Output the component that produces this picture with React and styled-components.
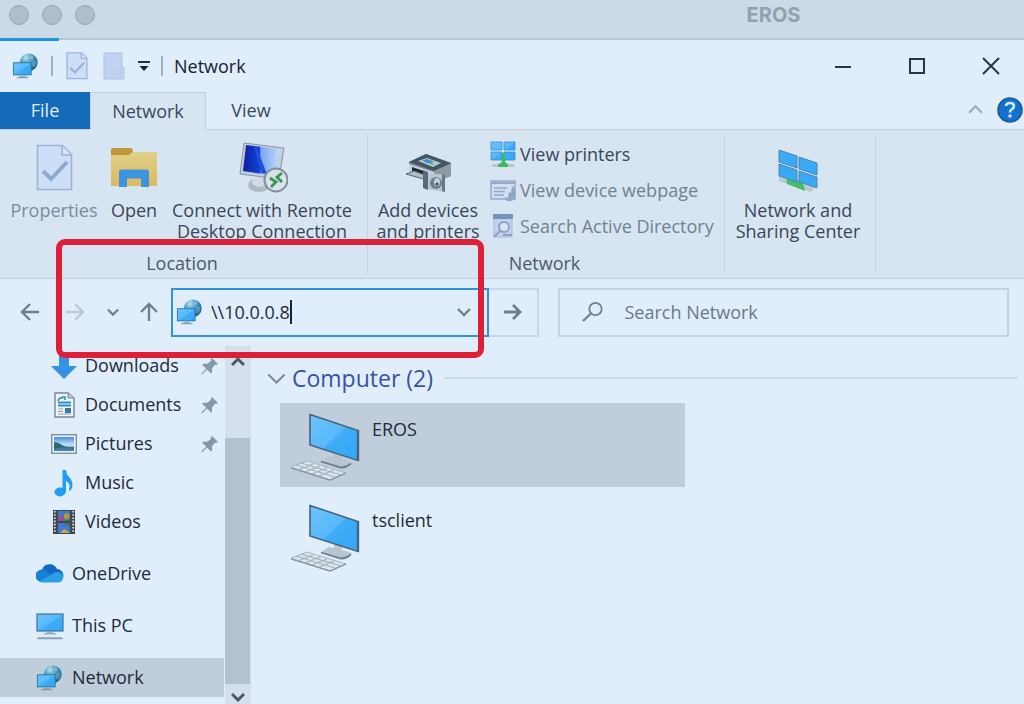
import React from "react";
import styled, { createGlobalStyle } from "styled-components";

const GlobalStyle = createGlobalStyle`
  * { box-sizing: border-box; }
  html, body { margin: 0; background: #e0eefb; }
  body, button, input {
    font-family: "Open Sans", "Noto Sans", sans-serif;
    font-size: 18px;
    line-height: 21px;
    color: #1f2a3c;
  }
  button { border: 0; padding: 0; background: none; }
  svg { display: block; flex: none; }
`;

const Page = styled.div`
  position: relative;
  display: flex;
  flex-direction: column;
  min-height: 100vh;
  overflow: hidden;
`;

/* ---------- outer window bar ---------- */
const HostBar = styled.header`
  position: relative;
  display: grid;
  grid-template-columns: 93px 1fr;
  align-items: center;
  height: 40px;
  padding: 0 0 8px 9px;
  background: #ccd9e6;
  border-bottom: 2px solid #bac8d5;
`;
const Lights = styled.div`
  display: flex;
  gap: 13px;
`;
const Light = styled.button`
  width: 20px;
  height: 20px;
  border-radius: 50%;
  background: #b1beca;
  border: 1px solid #98a6b3;
`;
const HostTitle = styled.div`
  font: 700 20px/24px Inter, sans-serif;
  color: #93a1af;
  text-align: center;
  padding-left: 421px;
`;
const Progress = styled.div`
  position: absolute;
  left: 0;
  bottom: -3px;
  width: 59px;
  height: 3px;
  background: #1f97df;
`;

/* ---------- explorer title bar ---------- */
const TitleBar = styled.div`
  display: flex;
  align-items: center;
  justify-content: space-between;
  height: 52px;
  padding: 0 20px 0 12px;
`;
const QuickTools = styled.div`
  display: flex;
  align-items: center;
  gap: 11px;
`;
const Divider = styled.span`
  width: 2px;
  height: 20px;
  background: #a3afbb;
`;
const IconButton = styled.button`
  display: flex;
  align-items: center;
  justify-content: center;
  width: ${(p) => p.$w || 26}px;
  height: ${(p) => p.$h || 28}px;
`;
const WindowTitle = styled.h1`
  margin: 0;
  font-size: 18px;
  line-height: 24px;
  font-weight: 400;
  color: #16202e;
`;
const WindowButtons = styled.div`
  display: flex;
  gap: 48px;
`;

/* ---------- tabs ---------- */
const TabBar = styled.div`
  display: flex;
  height: 38px;
  padding-right: 1px;
  border-bottom: 1px solid #c3d1de;
`;
const Tab = styled.button`
  height: ${(p) => (p.$active ? 38 : 37)}px;
  width: ${(p) => p.$w}px;
  color: ${(p) => (p.$file ? "#e0eefb" : "#3c4759")};
  background: ${(p) => (p.$file ? "#126ab8" : p.$active ? "#d7e5f3" : "transparent")};
  border: ${(p) => (p.$active ? "1px solid #c3d1de" : "0")};
  border-bottom: 0;
`;
const TabTools = styled.div`
  display: flex;
  align-items: center;
  gap: 14px;
  height: 35px;
  margin-left: auto;
`;

/* ---------- ribbon ---------- */
const Ribbon = styled.div`
  display: flex;
  height: 149px;
  padding: 4px 0 4px;
  background: #d7e5f3;
  border-bottom: 1px solid #c3d1de;
`;
const Group = styled.section`
  display: flex;
  flex-direction: column;
  justify-content: space-between;
  min-width: ${(p) => p.$w}px;
  border-right: 1px solid #c6d4e1;
`;
const GroupBody = styled.div`
  display: flex;
`;
const GroupName = styled.div`
  text-align: center;
  padding-right: 3px;
  color: #4d596a;
`;
const BigButton = styled.button`
  display: flex;
  flex-direction: column;
  align-items: center;
  justify-content: flex-start;
  gap: 8px;
  width: ${(p) => p.$w}px;
  padding-top: 10px;
  white-space: nowrap;
  color: ${(p) => (p.disabled ? "#7f8b9a" : "#3a4557")};
`;
const Line = styled.span`
  display: block;
`;
const SmallList = styled.div`
  display: flex;
  flex-direction: column;
  padding: 2px 10px 0 2px;
`;
const SmallButton = styled.button`
  display: flex;
  align-items: center;
  gap: 4px;
  height: 36px;
  white-space: nowrap;
  color: ${(p) => (p.disabled ? "#748191" : "#3a4557")};
`;

/* ---------- address row ---------- */
const AddressRow = styled.div`
  display: flex;
  align-items: center;
  height: 67px;
  padding: 0 15px 1px 17px;
`;
const NavButtons = styled.nav`
  display: flex;
  flex: none;
  align-items: center;
  justify-content: space-between;
  width: 154px;
  padding-right: 11px;
`;
const AddressGroup = styled.div`
  display: flex;
  flex: 368 1 368px;
  height: 49px;
`;
const AddressBox = styled.label`
  display: flex;
  flex: 1;
  align-items: center;
  padding: 0 16px 0 3px;
  border: 2px solid #3591df;
`;
const AddressInput = styled.input`
  field-sizing: content;
  margin-left: 7px;
  padding: 0;
  border: 0;
  outline: 0;
  background: transparent;
  line-height: 24px;
`;
const TextCaret = styled.span`
  width: 2px;
  height: 24px;
  background: #1a2431;
`;
const DropButton = styled(IconButton)`
  margin-left: auto;
`;
const GoButton = styled.button`
  display: flex;
  align-items: center;
  justify-content: center;
  width: 50px;
  border: 2px solid #c9d7e4;
  border-left: 0;
`;
const SearchBox = styled.label`
  display: flex;
  flex: 450 1 450px;
  align-items: center;
  gap: 20px;
  height: 49px;
  margin-left: 19px;
  padding-left: 22px;
  border: 2px solid #c5d3e0;
`;
const SearchInput = styled.input`
  flex: 1;
  min-width: 0;
  padding: 0;
  border: 0;
  outline: 0;
  background: transparent;
  line-height: 24px;
  &::placeholder { color: #6b7887; opacity: 1; }
`;

/* ---------- body ---------- */
const Body = styled.div`
  display: flex;
  flex: 1;
`;
const Sidebar = styled.nav`
  width: 224px;
`;
const SideList = styled.ul`
  list-style: none;
  margin: 0;
  padding: 0;
`;
const SideItem = styled.li`
  margin-top: ${(p) => (p.$root ? 13 : 0)}px;
`;
const SideLink = styled.a`
  display: flex;
  align-items: center;
  gap: 8px;
  height: 39px;
  padding: 0 5px 0 ${(p) => (p.$root ? 36 : 51)}px;
  color: #1f2a3c;
  text-decoration: none;
  background: ${(p) => (p.$current ? "#c0cddb" : "transparent")};
`;
const SideText = styled.span`
  flex: 1;
`;
const ScrollBar = styled.div`
  display: flex;
  flex-direction: column;
  width: 26px;
  margin-left: 1px;
  padding-right: 1px;
  background: #d3dfec;
`;
const ScrollThumb = styled.div`
  flex: 1;
  margin-top: 60px;
  background: #b4c2d0;
`;
const ScrollButton = styled(IconButton)`
  width: 100%;
  height: ${(p) => p.$h}px;
  align-items: ${(p) => (p.$end ? "flex-end" : "center")};
`;
const Content = styled.main`
  flex: 1;
  padding: 17px 6px 0 16px;
`;
const SectionHead = styled.div`
  display: flex;
  align-items: center;
  height: 30px;
  gap: 6px;
`;
const SectionTitle = styled.h2`
  margin: 0 6px 0 0;
  font-size: 23px;
  line-height: 30px;
  font-weight: 400;
  color: #3b51a4;
`;
const Rule = styled.span`
  flex: 1;
  height: 2px;
  background: #cbd9e7;
`;
const Computers = styled.div`
  display: flex;
  flex-direction: column;
  gap: 7px;
  max-width: 418px;
  padding: 10px 0 0 13px;
`;
const Computer = styled.button`
  display: flex;
  align-items: flex-start;
  gap: 12px;
  height: 84px;
  padding: 8px 0 0 10px;
  text-align: left;
  background: ${(p) => (p.$selected ? "#c0cddb" : "transparent")};
`;
const ComputerName = styled.span`
  padding-top: 8px;
`;
const Highlight = styled.div`
  position: absolute;
  left: 56px;
  top: 239px;
  width: 428px;
  height: 119px;
  border: 6px solid #dd1f38;
  border-radius: 9px;
  pointer-events: none;
`;

/* ---------- drawings ---------- */
const Defs = styled.svg`
  position: absolute;
`;
const Gradients = () => (
  <Defs width="0" height="0" aria-hidden="true">
    <defs>
      <linearGradient id="screen" x1="0" y1="0" x2="1" y2="1">
        <stop offset="0" stopColor="#6cc3fa" />
        <stop offset=".5" stopColor="#58b9fa" />
        <stop offset=".52" stopColor="#3fadf8" />
        <stop offset="1" stopColor="#34a6f4" />
      </linearGradient>
      <radialGradient id="globe" cx=".35" cy=".25" r=".8">
        <stop offset="0" stopColor="#a9d6e8" />
        <stop offset=".45" stopColor="#4c9cc4" />
        <stop offset="1" stopColor="#1c5478" />
      </radialGradient>
      <linearGradient id="folder" x1="0" y1="0" x2="0" y2="1">
        <stop offset="0" stopColor="#dfd08b" />
        <stop offset="1" stopColor="#dcb95d" />
      </linearGradient>
      <linearGradient id="rdp" x1="0" y1="0" x2="1" y2="0">
        <stop offset="0" stopColor="#0a1f9c" />
        <stop offset=".45" stopColor="#1641d8" />
        <stop offset=".48" stopColor="#7ba3ee" />
        <stop offset="1" stopColor="#c4dcf8" />
      </linearGradient>
      <linearGradient id="photo" x1="0" y1="0" x2="0" y2="1">
        <stop offset="0" stopColor="#3f8eea" />
        <stop offset=".55" stopColor="#c5e2f3" />
        <stop offset="1" stopColor="#2d7396" />
      </linearGradient>
    </defs>
  </Defs>
);

const NetworkIcon = () => (
  <svg width="28" height="28" viewBox="0 0 30 30">
    <circle cx="18" cy="11" r="9.500" fill="url(#globe)" />
    <path d="M13 4c2-2 4-2 5-2l-1 3 1 2-3 2-3-1zM20 3l3 2-1 3-2-1z" fill="#b3dcea" opacity=".45" />
    <path d="M22 10l4-1q1 5-2 8l-3-2z" fill="#8fc0d6" opacity=".35" />
    <rect x="1.500" y="11.500" width="19" height="13" fill="url(#screen)" stroke="#2b79a8" />
    <path d="M8 26h7M5.500 27.500h12" stroke="#829bb0" strokeWidth="1.300" />
  </svg>
);
const DocCheck = ({ big }) => (
  <svg width={big ? 37 : 22} height={big ? 48 : 28} viewBox="0 0 37 48">
    <path d="M1.500 1.500h25l9 9v35h-34z" fill="#cddff6" stroke="#9cb3dc" strokeWidth={big ? 1.6 : 2.2} />
    <path d="M26 2v9h9" fill="#d9e7f6" stroke="#9cb3dc" strokeWidth={big ? 1.6 : 2.2} />
    <path d="M7 27l8 8 16-17" fill="none" stroke={big ? "#8ea8ce" : "#9db2da"} strokeWidth="4" />
  </svg>
);
const NewFolder = () => (
  <svg width="22" height="28" viewBox="0 0 22 28">
    <path d="M1 1h18v14h2v12H1z" fill="#c0d4f1" stroke="#aec2e8" />
    <path d="M17 26V16h3" fill="none" stroke="#b3c4ec" />
  </svg>
);
const OpenFolder = () => (
  <svg width="48" height="48" viewBox="0 0 48 48">
    <path d="M1 6q0-2 2-2h17q3 0 3 4l-3 4H1z" fill="#c29638" />
    <path d="M1 11h18l4-3h24v34H1z" fill="url(#folder)" />
    <path d="M9 43V28q0-2.500 2.500-2.500h25q2.500 0 2.500 2.500v15h-8v-8.500H17V43z" fill="#3a94df" />
  </svg>
);
const RemoteIcon = () => (
  <svg width="52" height="52" viewBox="-2 0 52 52">
    <ellipse cx="21" cy="43" rx="11" ry="7" fill="#aebbc7" />
    <ellipse cx="22" cy="40" rx="8" ry="5" fill="#d2dbe3" />
    <path d="M6 1l40 5-5 31L2 32z" fill="#c3ced9" stroke="#8795a4" />
    <path d="M8 3l34 4-4 27-33-5z" fill="url(#rdp)" />
    <path d="M18 4l11 28-6-1L16 4z" fill="#1d50dc" />
    <circle cx="38" cy="38" r="11.500" fill="#d8e2eb" stroke="#818e9b" strokeWidth="2" />
    <path d="M32 36l6 4-5 5M44 31l-5 4 5 5" fill="none" stroke="#36974b" strokeWidth="2.800" />
  </svg>
);
const PrinterIcon = () => (
  <svg width="48" height="48" viewBox="0 0 48 48">
    <path d="M5 18L22 10l25 9v13l-18 7L5 29z" fill="#7a8793" />
    <path d="M5 18L22 10l25 9-17 8z" fill="#455663" />
    <path d="M14 17l9-3 14 5-8 4z" fill="#b4c9d8" />
    <path d="M18 16.500l5-1.500 7 2.500-6 2z" fill="#3f8fd6" />
    <path d="M25 19l3 2 2-1-3-2z" fill="#4fb269" />
    <path d="M30 27l17-7v12l-17 5z" fill="#8e9ba5" />
    <path d="M5 20l25 8v9L5 28z" fill="#c8d3db" />
    <path d="M8 23l12 4v4L8 27z" fill="#1f2c35" />
    <path d="M2 30l8-3 13 5v4z" fill="#b1bec9" stroke="#586a77" />
    <path d="M19 26l5 2v18l-5-2z" fill="#5c6b78" />
    <path d="M24 29l16 2v17l-16-3z" fill="#bbc6cf" />
    <path d="M38 30l3 1v17l-3-1z" fill="#687785" />
    <circle cx="32" cy="39" r="6" fill="#73818d" />
    <ellipse cx="33" cy="38" rx="3" ry="4" fill="#c6d0d8" />
    <circle cx="33" cy="40" r="1.500" fill="#3d4b57" />
  </svg>
);
const ViewPrintersIcon = () => (
  <svg width="26" height="28" viewBox="0 0 26 28">
    <path d="M1 2h11v8H1zM14 2h11v8H14zM1 12h11v8H1zM14 12h11v8H14z" fill="url(#screen)" stroke="#358fc8" strokeWidth=".8" />
    <path d="M2 24h22v3H2z" fill="#b7c6cc" />
    <path d="M12 13h3v8q0 2 3 3v3H8v-3q4-1 4-3z" fill="#3fb75c" />
  </svg>
);
const WebpageIcon = () => (
  <svg width="26" height="24" viewBox="0 0 26 24">
    <rect x="1" y="3" width="24" height="18" fill="#d0def0" stroke="#94a9cb" strokeWidth="1.500" />
    <path d="M1 5h24" stroke="#94a9cb" strokeWidth="2" />
    <path d="M4 10h13M4 13.500h11M4 17h10" stroke="#93a8c9" strokeWidth="1.600" />
    <path d="M22 8l3 3v10l-4 2h-4l-3-4 4 1 1-6 2 1z" fill="#8fa5c7" />
  </svg>
);
const DirectoryIcon = () => (
  <svg width="26" height="26" viewBox="0 0 26 26">
    <rect x="4" y="2" width="18" height="22" fill="#c0d1e9" stroke="#a6b9d7" />
    <path d="M3 1h20v5H3z" fill="#7793ba" />
    <circle cx="14" cy="14" r="5" fill="#d8e4f4" stroke="#8ba1c6" strokeWidth="2" />
    <path d="M10.500 17.500L4 24M13 22h9" stroke="#8ba1c6" strokeWidth="2" />
  </svg>
);
const SharingIcon = () => (
  <svg width="44" height="48" viewBox="0 0 44 48">
    <path d="M3 33l35 11-3 4L3 37z" fill="#bdc8cc" />
    <path d="M10 33l17 5 2 9-18-7z" fill="#48be67" />
    <path d="M3 6l18 6v12L3 18zM23 13l18 6v12l-18-6zM3 20l18 6v12L3 32zM23 27l18 6v11l-18-6z" fill="#39a9f6" stroke="#4b88af" strokeWidth="1" />
  </svg>
);
const Arrow = ({ turn = 0, color = "#70808f", size = 22 }) => (
  <svg width={size} height={size} viewBox="0 0 22 22">
    <path transform={`rotate(${turn} 11 11)`} d="M20 11H3M11 3l-8 8 8 8" fill="none" stroke={color} strokeWidth="2.400" />
  </svg>
);
const Chevron = ({ up, w = 14, color = "#708090", stroke = 2 }) => (
  <svg width={w} height={w} viewBox="0 0 14 14">
    <path d={up ? "M1 10l6-6 6 6" : "M1 4l6 6 6-6"} fill="none" stroke={color} strokeWidth={stroke} />
  </svg>
);
const GoArrow = () => (
  <svg width="20" height="18" viewBox="0 0 20 18">
    <path d="M1 9h16M10 2l7 7-7 7" fill="none" stroke="#6f7e8d" strokeWidth="2.800" />
  </svg>
);
const SearchIcon = () => (
  <svg width="22" height="22" viewBox="0 0 22 22">
    <circle cx="13.500" cy="8" r="6.200" fill="none" stroke="#6e7f90" strokeWidth="1.800" />
    <path d="M9 12.500L1 20" stroke="#6e7f90" strokeWidth="2.200" />
  </svg>
);
const PinIcon = () => (
  <svg width="18" height="18" viewBox="0 0 18 18">
    <path d="M11 1l6 6-2 1-1-.5-3 4v4l-1 1-4-4-5 5-.8-.8 5-5-4-4 1-1h4l4-3-.5-1z" fill="#8398ab" />
  </svg>
);
const DownloadIcon = () => (
  <svg width="26" height="26" viewBox="0 0 26 26">
    <path d="M8 0h10v13h8L13 26 0 13h8z" fill="#3591e2" />
  </svg>
);
const DocumentIcon = () => (
  <svg width="26" height="28" viewBox="0 0 26 28">
    <path d="M4 2h13l6 5v19H4z" fill="#eef4f8" stroke="#768591" strokeWidth="1.400" />
    <path d="M17 2v5h6" fill="#c1cbd3" stroke="#768591" />
    <path d="M11 6h3v3M7 10q1-4 5-3" fill="none" stroke="#2d8fc9" strokeWidth="1.600" />
    <path d="M7 11.500h13M7 14.500h13" stroke="#2d8fc9" strokeWidth="1.800" />
    <path d="M7 18h5M7 20.500h5M7 23h13" stroke="#8d9ba6" strokeWidth="1.200" />
    <path d="M14 17h6v5h-6z" fill="#3a75a9" />
  </svg>
);
const PictureIcon = () => (
  <svg width="26" height="20" viewBox="0 0 26 20">
    <rect x=".7" y=".7" width="24.600" height="18.600" fill="#edf4f9" stroke="#80909d" strokeWidth="1.400" />
    <rect x="3" y="3" width="20" height="14" fill="url(#photo)" />
    <path d="M3 8q4 0 8 3t12 2v4H3z" fill="#2b6a73" />
    <path d="M3 15q10-3 20 0v2H3z" fill="#4282a8" />
  </svg>
);
const MusicIcon = () => (
  <svg width="26" height="28" viewBox="0 0 26 28">
    <ellipse cx="9" cy="23" rx="5.600" ry="4.400" fill="#239df2" />
    <path d="M11.500 1H15q0 4 3 7 6 6 2 13l-2 1q2-8-3-10v11h-3.500z" fill="#239df2" />
  </svg>
);
const VideoIcon = () => (
  <svg width="26" height="26" viewBox="0 0 26 26">
    <path d="M2 1h22v24H2z" fill="#3f4850" />
    <path d="M3.800 2v22M22.200 2v22" stroke="#d7e0e6" strokeWidth="1.800" strokeDasharray="1.600 1.600" />
    <path d="M7 2h12v10H7zM7 14h12v10H7z" fill="#3f79cf" />
    <path d="M7 9l4-3 3 3-2 3H7z" fill="#9b4e8f" />
    <path d="M13 5l4-1 2 4-3 3-3-2z" fill="#b39d33" />
    <path d="M12 12h7v-2zM13 14h6v4z" fill="#3b7a4b" />
    <path d="M9 24l4-4 5 3v1z" fill="#d4a83a" />
  </svg>
);
const CloudIcon = () => (
  <svg width="28" height="20" viewBox="0 0 28 20">
    <path d="M7 18a6 6 0 01-1-12 8 8 0 0115-1 6.500 6.500 0 010 13z" fill="#1169bf" />
    <path d="M7 18A6.300 6.300 0 116 5.500q3 0 5 2l8 5.500-9 5z" fill="#1480d8" />
    <path d="M4 17l11-6q3-3 7-3a5 5 0 010 10.500H7q-2 0-3-1.500z" fill="#2ba0e6" />
  </svg>
);
const PcIcon = () => (
  <svg width="28" height="28" viewBox="0 0 28 28">
    <rect x="1" y="2" width="26" height="17" fill="url(#screen)" stroke="#38779f" strokeWidth="1.200" />
    <path d="M11 20h6v1h3v1.500H8V21h3z" fill="#9badbc" />
    <path d="M2 25.200h24l1 2H1z" fill="#879fb7" />
  </svg>
);
const ComputerIcon = () => (
  <svg width="70" height="70" viewBox="0 0 70 70">
    <path d="M1 56l16-6 39 12-16 7z" fill="#dbe5ed" stroke="#a9b6c1" />
    <path d="M1 57l39 12 16-7" fill="none" stroke="#7e8e9c" strokeWidth="1.300" />
    <path d="M6 54l39 12M11 52l40 12M8 59l15-6M15 61l15-6M22 63l15-6M29 65l15-6" stroke="#a3b1bd" strokeWidth="1.200" />
    <path d="M31 50l8-5 5 1v-5l8 2v5l10 3-4 5-7 1z" fill="#b9c6d1" />
    <path d="M31 50.500l20 6q5 0 10-4" fill="none" stroke="#687c8c" strokeWidth="1.800" />
    <path d="M20 3.500l48 16v30L20 34z" fill="url(#screen)" stroke="#47647a" strokeWidth="1.600" />
    <path d="M68 19v31" stroke="#47647a" strokeWidth="2.400" />
  </svg>
);

const places = [
  ["Downloads", DownloadIcon, true],
  ["Documents", DocumentIcon, true],
  ["Pictures", PictureIcon, true],
  ["Music", MusicIcon],
  ["Videos", VideoIcon],
];
const roots = [
  ["OneDrive", CloudIcon],
  ["This PC", PcIcon],
  ["Network", NetworkIcon, true],
];

export default function App() {
  return (
    <Page>
      <GlobalStyle />
      <Gradients />
      <HostBar>
        <Lights>
          <Light aria-label="Close session" />
          <Light aria-label="Minimize session" />
          <Light aria-label="Zoom session" />
        </Lights>
        <HostTitle>EROS</HostTitle>
        <Progress />
      </HostBar>

      <TitleBar>
        <QuickTools>
          <NetworkIcon />
          <Divider />
          <IconButton aria-label="Properties"><DocCheck /></IconButton>
          <IconButton aria-label="New folder"><NewFolder /></IconButton>
          <IconButton $w={12} aria-label="Customize toolbar">
            <svg width="12" height="12" viewBox="0 0 12 12">
              <path d="M0 2h12" stroke="#26303c" strokeWidth="2" />
              <path d="M1.500 6h9L6 11z" fill="#1a222c" />
            </svg>
          </IconButton>
          <Divider />
          <WindowTitle>Network</WindowTitle>
        </QuickTools>
        <WindowButtons>
          <IconButton aria-label="Minimize">
            <svg width="18" height="18"><path d="M1 10h16" stroke="#2b3541" strokeWidth="2" /></svg>
          </IconButton>
          <IconButton aria-label="Maximize">
            <svg width="18" height="18"><path d="M2 2h14v14H2z" fill="none" stroke="#2b3541" strokeWidth="2" /></svg>
          </IconButton>
          <IconButton aria-label="Close">
            <svg width="18" height="18"><path d="M1 1l16 16M17 1L1 17" stroke="#2b3541" strokeWidth="2" /></svg>
          </IconButton>
        </WindowButtons>
      </TitleBar>

      <TabBar>
        <Tab $file $w={90}>File</Tab>
        <Tab $active $w={116}>Network</Tab>
        <Tab $w={90}>View</Tab>
        <TabTools>
          <IconButton $w={15} aria-label="Collapse ribbon"><Chevron up w={15} color="#9eabb8" /></IconButton>
          <IconButton aria-label="Help">
            <svg width="26" height="26" viewBox="0 0 26 26">
              <circle cx="13" cy="13" r="12" fill="#1372cc" stroke="#155797" strokeWidth="1.500" />
              <path d="M9 9q0-3 4-3t4 3q0 2-2.500 3.500Q13 13.500 13 15.500" fill="none" stroke="#d6eaff" strokeWidth="2.600" />
              <path d="M11.500 17.500h3v3h-3z" fill="#d6eaff" />
            </svg>
          </IconButton>
        </TabTools>
      </TabBar>

      <Ribbon>
        <Group $w={368}>
          <GroupBody>
            <BigButton $w={108} disabled><DocCheck big />Properties</BigButton>
            <BigButton $w={52}><OpenFolder />Open</BigButton>
            <BigButton $w={204}>
              <IconButton as="span" $w={52} $h={48}><RemoteIcon /></IconButton>
              <span><Line>Connect with Remote</Line><Line>Desktop Connection</Line></span>
            </BigButton>
          </GroupBody>
          <GroupName>Location</GroupName>
        </Group>
        <Group $w={357}>
          <GroupBody>
            <BigButton $w={120}>
              <PrinterIcon />
              <span><Line>Add devices</Line><Line>and printers</Line></span>
            </BigButton>
            <SmallList>
              <SmallButton><ViewPrintersIcon />View printers</SmallButton>
              <SmallButton disabled><WebpageIcon />View device webpage</SmallButton>
              <SmallButton disabled><DirectoryIcon />Search Active Directory</SmallButton>
            </SmallList>
          </GroupBody>
          <GroupName>Network</GroupName>
        </Group>
        <Group $w={151}>
          <BigButton $w={146}>
            <SharingIcon />
            <span><Line>Network and</Line><Line>Sharing Center</Line></span>
          </BigButton>
        </Group>
      </Ribbon>

      <AddressRow>
        <NavButtons>
          <IconButton aria-label="Back"><Arrow /></IconButton>
          <IconButton aria-label="Forward"><Arrow turn={180} color="#bccad7" /></IconButton>
          <IconButton $w={12} aria-label="Recent locations"><Chevron w={12} stroke={2.6} /></IconButton>
          <IconButton $w={22} aria-label="Up"><Arrow turn={90} /></IconButton>
        </NavButtons>
        <AddressGroup>
          <AddressBox>
            <NetworkIcon />
            <AddressInput aria-label="Address" defaultValue={"\\\\10.0.0.8"} />
            <TextCaret />
            <DropButton $w={14} aria-label="Previous locations"><Chevron stroke={2.4} /></DropButton>
          </AddressBox>
          <GoButton aria-label="Go"><GoArrow /></GoButton>
        </AddressGroup>
        <SearchBox>
          <SearchIcon />
          <SearchInput aria-label="Search Network" placeholder="Search Network" />
        </SearchBox>
      </AddressRow>

      <Body>
        <Sidebar>
          <SideList>
            {places.map(([name, Icon, pinned]) => (
              <SideItem key={name}>
                <SideLink href="#">
                  <Icon />
                  <SideText>{name}</SideText>
                  {pinned && <PinIcon />}
                </SideLink>
              </SideItem>
            ))}
          </SideList>
          <SideList>
            {roots.map(([name, Icon, current]) => (
              <SideItem key={name} $root>
                <SideLink href="#" $root $current={current}>
                  <Icon />
                  <SideText>{name}</SideText>
                </SideLink>
              </SideItem>
            ))}
          </SideList>
        </Sidebar>
        <ScrollBar>
          <ScrollButton $h={32} aria-label="Scroll up"><Chevron up w={14} color="#4b5866" stroke={3} /></ScrollButton>
          <ScrollThumb />
          <ScrollButton $h={20} $end aria-label="Scroll down"><Chevron w={14} color="#4b5866" stroke={3} /></ScrollButton>
        </ScrollBar>
        <Content>
          <SectionHead>
            <Chevron w={19} color="#7d8c9b" stroke={1.6} />
            <SectionTitle>Computer (2)</SectionTitle>
            <Rule />
          </SectionHead>
          <Computers>
            <Computer $selected><ComputerIcon /><ComputerName>EROS</ComputerName></Computer>
            <Computer><ComputerIcon /><ComputerName>tsclient</ComputerName></Computer>
          </Computers>
        </Content>
      </Body>
      <Highlight />
    </Page>
  );
}
